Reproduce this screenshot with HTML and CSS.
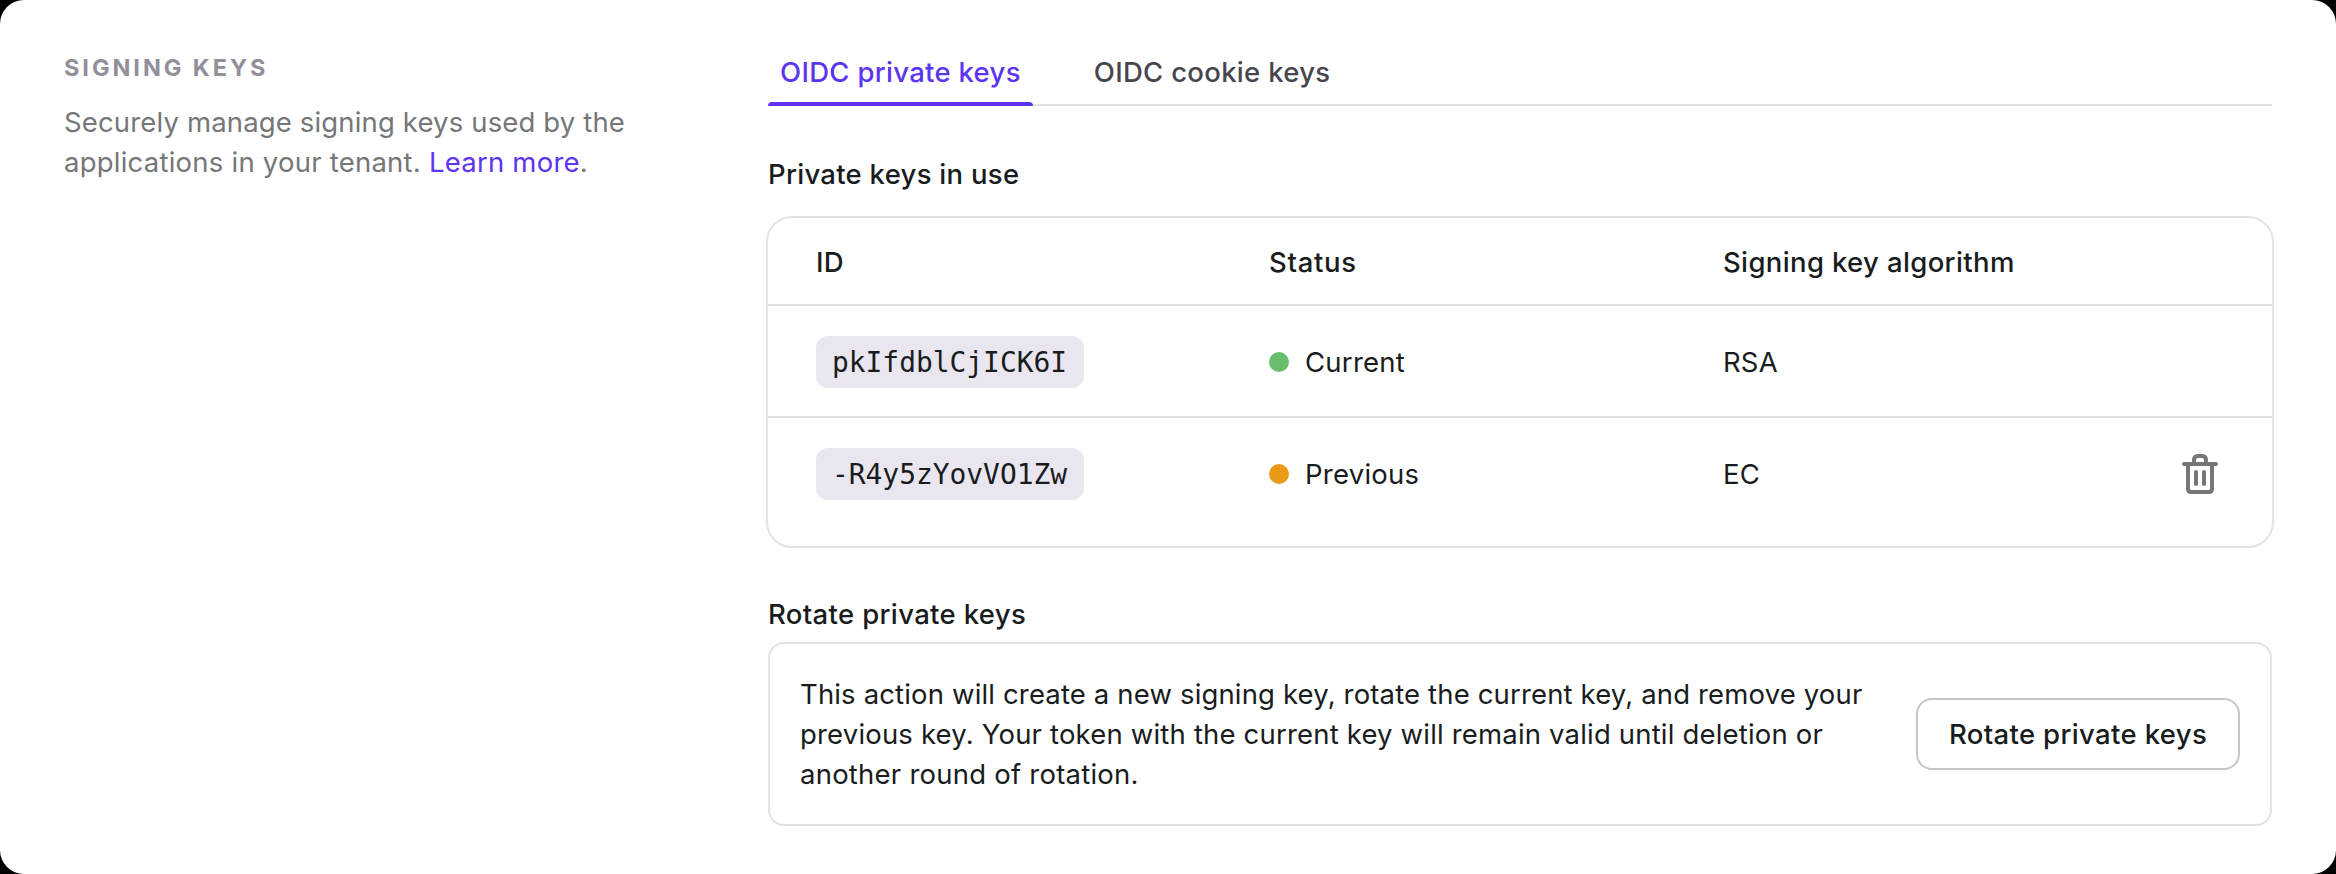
FILE: index.html
```html
<!DOCTYPE html>
<html lang="en">
<head>
<meta charset="utf-8">
<title>Signing keys</title>
<link rel="stylesheet" href="styles.css">
</head>
<body>
<main class="card">
  <section class="intro">
    <h2 class="intro-title">SIGNING KEYS</h2>
    <p class="intro-text">Securely manage signing keys used by the<br><span class="loose">applications in your tenant. <a class="link">Learn more</a>.</span></p>
  </section>
  <section class="content">
    <nav class="tabs">
      <a class="tab tab-active">OIDC private keys</a>
      <a class="tab">OIDC cookie keys</a>
    </nav>
    <h3 class="label label-table">Private keys in use</h3>
    <div class="table">
      <div class="row row-head">
        <div>ID</div>
        <div class="head-status">Status</div>
        <div>Signing key algorithm</div>
      </div>
      <div class="row">
        <div><code class="chip">pkIfdblCjICK6I</code></div>
        <div class="status"><i class="dot dot-green"></i>Current</div>
        <div>RSA</div>
      </div>
      <div class="row row-last">
        <div><code class="chip">-R4y5zYovVO1Zw</code></div>
        <div class="status"><i class="dot dot-orange"></i>Previous</div>
        <div>EC</div>
        <svg class="trash" viewBox="0 0 20 20" fill="none" stroke="#747778" stroke-width="2" stroke-linecap="round" stroke-linejoin="round">
          <path d="M2 5H18M4 5V17.5Q4 19 5.5 19H14.5Q16 19 16 17.5V5M7 5V3Q7 1 9 1H11Q13 1 13 3V5M8 9V15M12 9V15"/>
        </svg>
      </div>
    </div>
    <h3 class="label label-rotate">Rotate private keys</h3>
    <div class="panel">
      <p class="panel-text">This action will create a new signing key, rotate the current key, and remove your<br><span class="open">previous key. Your token with the current key will remain valid until deletion or</span><br><span class="loose">another round of rotation.</span></p>
      <button class="button">Rotate private keys</button>
    </div>
  </section>
</main>
</body>
</html>
```
FILE: styles.css
```css
* { box-sizing: border-box; }
body { margin: 0; background: #000; font: 27.5px/40px Inter, "Liberation Sans", sans-serif; letter-spacing: 0.15px; color: #191c1d; }
h2, h3, p { margin: 0; }
.card { width: 2336px; height: 874px; border-radius: 24px; background: #fff; padding: 48px 64px; display: flex; gap: 144px; }
.intro { width: 560px; white-space: nowrap; }
.intro-title { font-size: 23.5px; line-height: 40px; font-weight: 700; letter-spacing: 2.95px; color: #928f9a; }
.intro-text { margin-top: 14px; color: #747778; }
.loose { letter-spacing: 0.23px; }
.open { letter-spacing: 0.18px; }
.link { color: #5d34f2; }
.content { width: 1504px; }
.tabs { height: 58px; border-bottom: 2px solid #e3e3e4; display: flex; gap: 49px; font-weight: 500; letter-spacing: 0.3px; color: #47464e; }
.tab { height: 58px; padding: 4px 12px 0; }
.tab-active { color: #5d34f2; }
.tab-active::after { content: ""; display: block; height: 4px; margin: 10px -12px 0; border-radius: 4px 4px 0 0; background: #5d34f2; }
.label { font-size: 27.5px; font-weight: 500; line-height: 40px; letter-spacing: 0.35px; }
.label-table { margin-top: 48px; letter-spacing: 0.28px; }
.table { margin: 22px -2px 0; height: 332px; border: 2px solid #e3e3e4; border-radius: 26px; }
.row { display: grid; grid-template-columns: 453px 454px 1fr 40px; align-items: center; padding: 2px 52px 0 48px; height: 112px; border-bottom: 2px solid #e0e3e3; }
.row-head { height: 88px; font-weight: 500; letter-spacing: 0.36px; }
.head-status { letter-spacing: 0.7px; }
.row-last { border-bottom: 0; padding-top: 0; }
.chip { display: block; width: 268px; height: 52px; border-radius: 12px; background: #e9e6f0; padding: 1px 16px 0; font: 27.9px/52px "DejaVu Sans Mono", monospace; letter-spacing: 0; }
.status { display: flex; align-items: center; gap: 16px; letter-spacing: 0.25px; }
.dot { width: 20px; height: 20px; border-radius: 50%; }
.dot-green { background: #68be6c; }
.dot-orange { background: #eb9918; }
.trash { width: 40px; height: 40px; overflow: visible; }
.label-rotate { margin-top: 46px; }
.panel { margin-top: 8px; height: 184px; border: 2px solid #e3e3e4; border-radius: 16px; padding: 0 30px; display: flex; align-items: center; justify-content: space-between; }
.panel-text { white-space: nowrap; }
.button { width: 324px; height: 72px; border: 2px solid #c4c7c7; border-radius: 16px; background: #fff; padding: 0; font: 500 27.5px/40px Inter, "Liberation Sans", sans-serif; letter-spacing: 0.35px; color: #191c1d; }
```
